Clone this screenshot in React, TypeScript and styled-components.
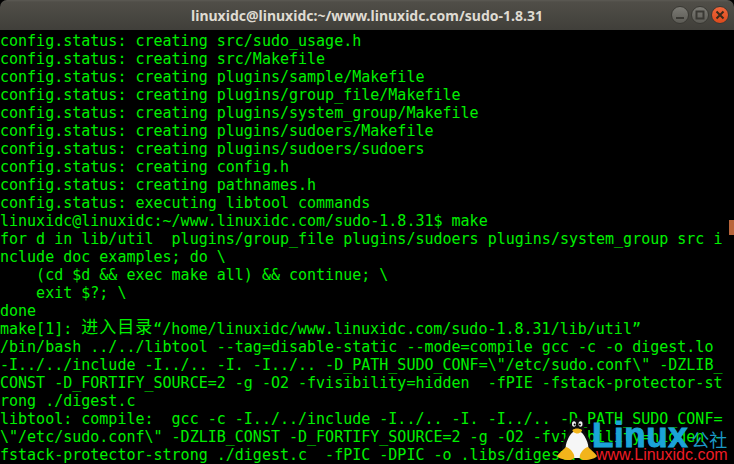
import React from "react";
import styled, { createGlobalStyle } from "styled-components";

const GlobalStyle = createGlobalStyle`
  html, body {
    margin: 0;
    padding: 0;
    background: #000;
    overflow: hidden;
  }
`;

const Window = styled.div`
  position: relative;
  width: 734px;
  height: 464px;
  background: #000;
  overflow: hidden;
`;

const TitleBar = styled.div`
  height: 30px;
  display: flex;
  align-items: center;
  justify-content: center;
  position: relative;
  border-radius: 7px 7px 0 0;
  background: linear-gradient(#5c5a54 0, #504e48 2px, #403f3a 100%);
`;

const Title = styled.div`
  font-family: "Noto Sans", "Open Sans", sans-serif;
  font-size: 14px;
  font-weight: 700;
  color: #dfdbd2;
  white-space: nowrap;
`;

const Controls = styled.div`
  position: absolute;
  right: 5px;
  top: 6px;
  display: flex;
  gap: 2px;
`;

const RoundButton = styled.div<{ $close?: boolean }>`
  width: 16px;
  height: 16px;
  border-radius: 50%;
  border: 1px solid #3a3934;
  display: flex;
  align-items: center;
  justify-content: center;
  background: ${(p) =>
    p.$close
      ? "linear-gradient(#f0673c, #dc4a1c)"
      : "linear-gradient(#7b7a74, #5c5b55)"};
`;

const Screen = styled.div`
  height: 434px;
  padding-top: 2px;
  overflow: hidden;
  background: #000;
`;

const Line = styled.div`
  height: 18px;
  line-height: 18px;
  font-family: "DejaVu Sans Mono", monospace;
  font-size: 15px;
  color: #00f000;
  white-space: pre;
`;

const Cjk = styled.span`
  font-family: "Noto Sans CJK SC", sans-serif;
  font-size: 17px;
  line-height: 0;
  letter-spacing: 1px;
  vertical-align: 1px;
`;

const ScrollMark = styled.div`
  position: absolute;
  right: 0;
  top: 220px;
  width: 5px;
  height: 15px;
  background: #b9653b;
`;

const Watermark = styled.div`
  position: absolute;
  left: 557px;
  top: 418px;
  width: 177px;
  height: 46px;
`;

const Tux = styled.svg`
  position: absolute;
  left: 0;
  top: 0;
`;

const BrandRow = styled.div`
  position: absolute;
  left: 35px;
  top: 0;
  display: flex;
  align-items: baseline;
`;

const Brand = styled.span`
  font-family: "Liberation Sans", sans-serif;
  font-weight: 700;
  font-size: 35px;
  line-height: 34px;
  letter-spacing: 0.6px;
  color: #1ba3d8;
  -webkit-text-stroke: 1px #1ba3d8;
`;

const BrandCjk = styled.span`
  font-family: "Noto Sans CJK SC", sans-serif;
  font-size: 18px;
  line-height: 20px;
  color: #1b98c6;
  margin-left: 3px;
`;

const Url = styled.div`
  position: absolute;
  left: 39px;
  top: 28px;
  font-family: "Liberation Sans", sans-serif;
  font-size: 16px;
  line-height: 18px;
  color: #ee1c25;
  white-space: nowrap;
`;

const lines: React.ReactNode[] = [
  "config.status: creating src/sudo_usage.h",
  "config.status: creating src/Makefile",
  "config.status: creating plugins/sample/Makefile",
  "config.status: creating plugins/group_file/Makefile",
  "config.status: creating plugins/system_group/Makefile",
  "config.status: creating plugins/sudoers/Makefile",
  "config.status: creating plugins/sudoers/sudoers",
  "config.status: creating config.h",
  "config.status: creating pathnames.h",
  "config.status: executing libtool commands",
  "linuxidc@linuxidc:~/www.linuxidc.com/sudo-1.8.31$ make",
  "for d in lib/util  plugins/group_file plugins/sudoers plugins/system_group src i",
  "nclude doc examples; do \\",
  "    (cd $d && exec make all) && continue; \\",
  "    exit $?; \\",
  "done",
  <>
    make[1]: <Cjk>进入目录</Cjk>“/home/linuxidc/www.linuxidc.com/sudo-1.8.31/lib/util”
  </>,
  "/bin/bash ../../libtool --tag=disable-static --mode=compile gcc -c -o digest.lo",
  "-I../../include -I../.. -I. -I../.. -D_PATH_SUDO_CONF=\\\"/etc/sudo.conf\\\" -DZLIB_",
  "CONST -D_FORTIFY_SOURCE=2 -g -O2 -fvisibility=hidden  -fPIE -fstack-protector-st",
  "rong ./digest.c",
  "libtool: compile:  gcc -c -I../../include -I../.. -I. -I../.. -D_PATH_SUDO_CONF=",
  "\\\"/etc/sudo.conf\\\" -DZLIB_CONST -D_FORTIFY_SOURCE=2 -g -O2 -fvisibility=hidden -",
  "fstack-protector-strong ./digest.c  -fPIC -DPIC -o .libs/digest.o",
];

function TuxLogo() {
  return (
    <Tux width="40" height="42" viewBox="0 0 40 42">
      {/* black body and flippers */}
      <path d="M20 0c-5 0-7 4-7 9 0 3-1 5-3 8-3 4-5 8-5 13 0 5 3 9 15 9s15-4 15-9c0-5-2-9-5-13-2-3-3-5-3-8 0-5-2-9-7-9z" fill="#0c0c0c" />
      {/* belly */}
      <path d="M20 13c-5 0-7 4-9 8-2 4-3 8-2 12 1 5 5 7 11 7s10-2 11-7c1-4 0-8-2-12-2-4-4-8-9-8z" fill="#f6f6f6" />
      <path d="M15 3h10v8H15z" fill="#0c0c0c" />
      {/* eyes */}
      <ellipse cx="17" cy="6" rx="2" ry="2.8" fill="#f2f2f2" />
      <ellipse cx="23.5" cy="6" rx="2" ry="2.8" fill="#f2f2f2" />
      <circle cx="17.6" cy="6.6" r="1" fill="#000" />
      <circle cx="22.9" cy="6.6" r="1" fill="#000" />
      {/* beak */}
      <path d="M15.5 12c2-2 7-2 9.5 0 .5 1-2 3.5-4.7 3.5s-5.3-2.5-4.8-3.5z" fill="#f2b41b" />
      {/* feet */}
      <path d="M9 29c-3 3-7 6-9 9 1 2 7 4 12 4 4 0 6-2 5-5-1-3-4-7-8-8z" fill="#f2b41b" />
      <path d="M31 29c3 3 7 6 9 9-1 2-7 4-12 4-4 0-6-2-5-5 1-3 4-7 8-8z" fill="#f2b41b" />
    </Tux>
  );
}

export default function App() {
  return (
    <Window>
      <GlobalStyle />
      <TitleBar>
        <Title>linuxidc@linuxidc:~/www.linuxidc.com/sudo-1.8.31</Title>
        <Controls>
          <RoundButton>
            <svg width="10" height="10" viewBox="0 0 10 10">
              <rect x="1" y="7" width="8" height="2" fill="#3a3934" />
            </svg>
          </RoundButton>
          <RoundButton>
            <svg width="10" height="10" viewBox="0 0 10 10">
              <rect x="1.5" y="1.5" width="7" height="7" fill="none" stroke="#3a3934" strokeWidth="2" />
            </svg>
          </RoundButton>
          <RoundButton $close>
            <svg width="10" height="10" viewBox="0 0 10 10">
              <path d="M1.5 1.5l7 7M8.5 1.5l-7 7" stroke="#3a2a1a" strokeWidth="2" />
            </svg>
          </RoundButton>
        </Controls>
      </TitleBar>
      <Screen>
        {lines.map((line, i) => (
          <Line key={i}>{line}</Line>
        ))}
      </Screen>
      <ScrollMark />
      <Watermark>
        <TuxLogo />
        <BrandRow>
          <Brand>Linux</Brand>
          <BrandCjk>公社</BrandCjk>
        </BrandRow>
        <Url>www.Linuxidc.com</Url>
      </Watermark>
    </Window>
  );
}
